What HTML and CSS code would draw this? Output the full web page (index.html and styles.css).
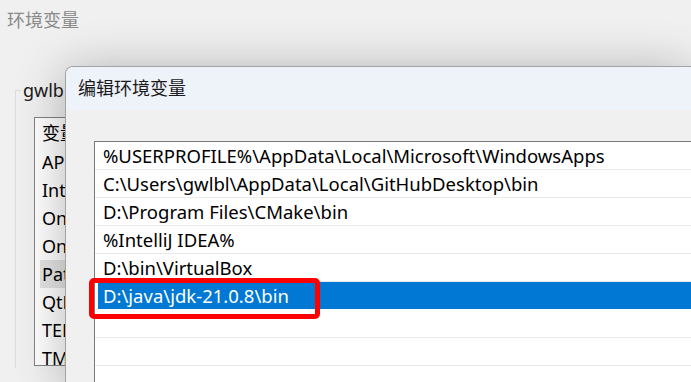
FILE: index.html
```html
<!DOCTYPE html>
<html lang="zh-CN">
<head>
    <meta charset="UTF-8">
    <title>编辑环境变量</title>
    <link rel="stylesheet" href="styles.css">
</head>
<body>
    <div class="main-window">
        <div class="main-title">环境变量</div>
        <fieldset class="group">
            <legend>gwlbl 的用户变量(U)</legend>
            <div class="var-list">
                <div class="var-head">变量</div>
                <div class="var-row">APPDATA</div>
                <div class="var-row">IntelliJ IDEA</div>
                <div class="var-row">OneDrive</div>
                <div class="var-row">OneDriveConsumer</div>
                <div class="var-row current">Path</div>
                <div class="var-row">QtDir</div>
                <div class="var-row">TEMP</div>
                <div class="var-row">TMP</div>
            </div>
        </fieldset>
    </div>

    <div class="dialog">
        <div class="dialog-title">编辑环境变量</div>
        <div class="dialog-body">
            <div class="path-list">
                <div class="path-row">%USERPROFILE%\AppData\Local\Microsoft\WindowsApps</div>
                <div class="path-row">C:\Users\gwlbl\AppData\Local\GitHubDesktop\bin</div>
                <div class="path-row">D:\Program Files\CMake\bin</div>
                <div class="path-row">%IntelliJ IDEA%</div>
                <div class="path-row">D:\bin\VirtualBox</div>
                <div class="path-row selected">D:\java\jdk-21.0.8\bin</div>
                <div class="path-row"></div>
                <div class="path-row"></div>
                <div class="mark"></div>
            </div>
        </div>
    </div>
</body>
</html>
```

FILE: styles.css
```css
html, body {
    margin: 0;
    padding: 0;
    width: 691px;
    height: 382px;
    overflow: hidden;
}
body {
    position: relative;
    font-family: "Noto Sans", "Noto Sans CJK SC", sans-serif;
    font-size: 18px;
    color: #000;
    background-color: #f0f0f0;
}
.main-title {
    padding: 8px 7px;
    line-height: 24px;
    color: #8a8a8a;
}
.group {
    margin: 38px 0 0 15px;
    padding: 0;
    width: 400px;
    height: 290px;
    box-sizing: border-box;
    border: 1px solid #dcdcdc;
    border-right: none;
    border-bottom: none;
}
.group legend {
    margin-left: 5px;
    padding: 0 2px;
    line-height: 24px;
    color: #1a1a1a;
}
.var-list {
    margin: 15px 0 0 18px;
    width: 300px;
    height: 247px;
    padding-left: 5px;
    border: 1px solid #828282;
    background-color: #fff;
    overflow: hidden;
}
.var-head {
    height: 30px;
    line-height: 30px;
    padding-left: 2px;
}
.var-row {
    height: 28px;
    line-height: 28px;
    padding-left: 2px;
}
.var-row.current {
    background-color: #e5e5e5;
}
.dialog {
    position: absolute;
    left: 65px;
    top: 66px;
    right: 0;
    bottom: 0;
    border: 1px solid #a3a3a3;
    border-right: none;
    border-bottom: none;
    border-radius: 8px 0 0 0;
    background-color: #f0f0f0;
    box-shadow: 0 6px 50px rgba(0,0,0,0.3);
    overflow: hidden;
}
.dialog-title {
    height: 43px;
    line-height: 43px;
    padding-left: 12px;
    background-color: #eef2f9;
    color: #1a1a1a;
}
.dialog-body {
    padding: 31px 0 0 28px;
}
.path-list {
    position: relative;
    height: 241px;
    border-top: 1px solid #7a7a7a;
    border-left: 1px solid #7a7a7a;
    background-color: #fff;
}
.path-row {
    height: 27px;
    line-height: 27px;
    padding-left: 8px;
    font-size: 18.5px;
    border-bottom: 1px solid #ebebeb;
    white-space: nowrap;
}
.path-row.selected {
    margin-left: 3px;
    padding-left: 5px;
    background-color: #0078d4;
    color: #fff;
    border-bottom-color: #fff;
}
.mark {
    position: absolute;
    left: -6px;
    top: 136px;
    width: 231px;
    height: 41px;
    box-sizing: border-box;
    border: 5px solid #ff0000;
    border-radius: 5px;
}
```
